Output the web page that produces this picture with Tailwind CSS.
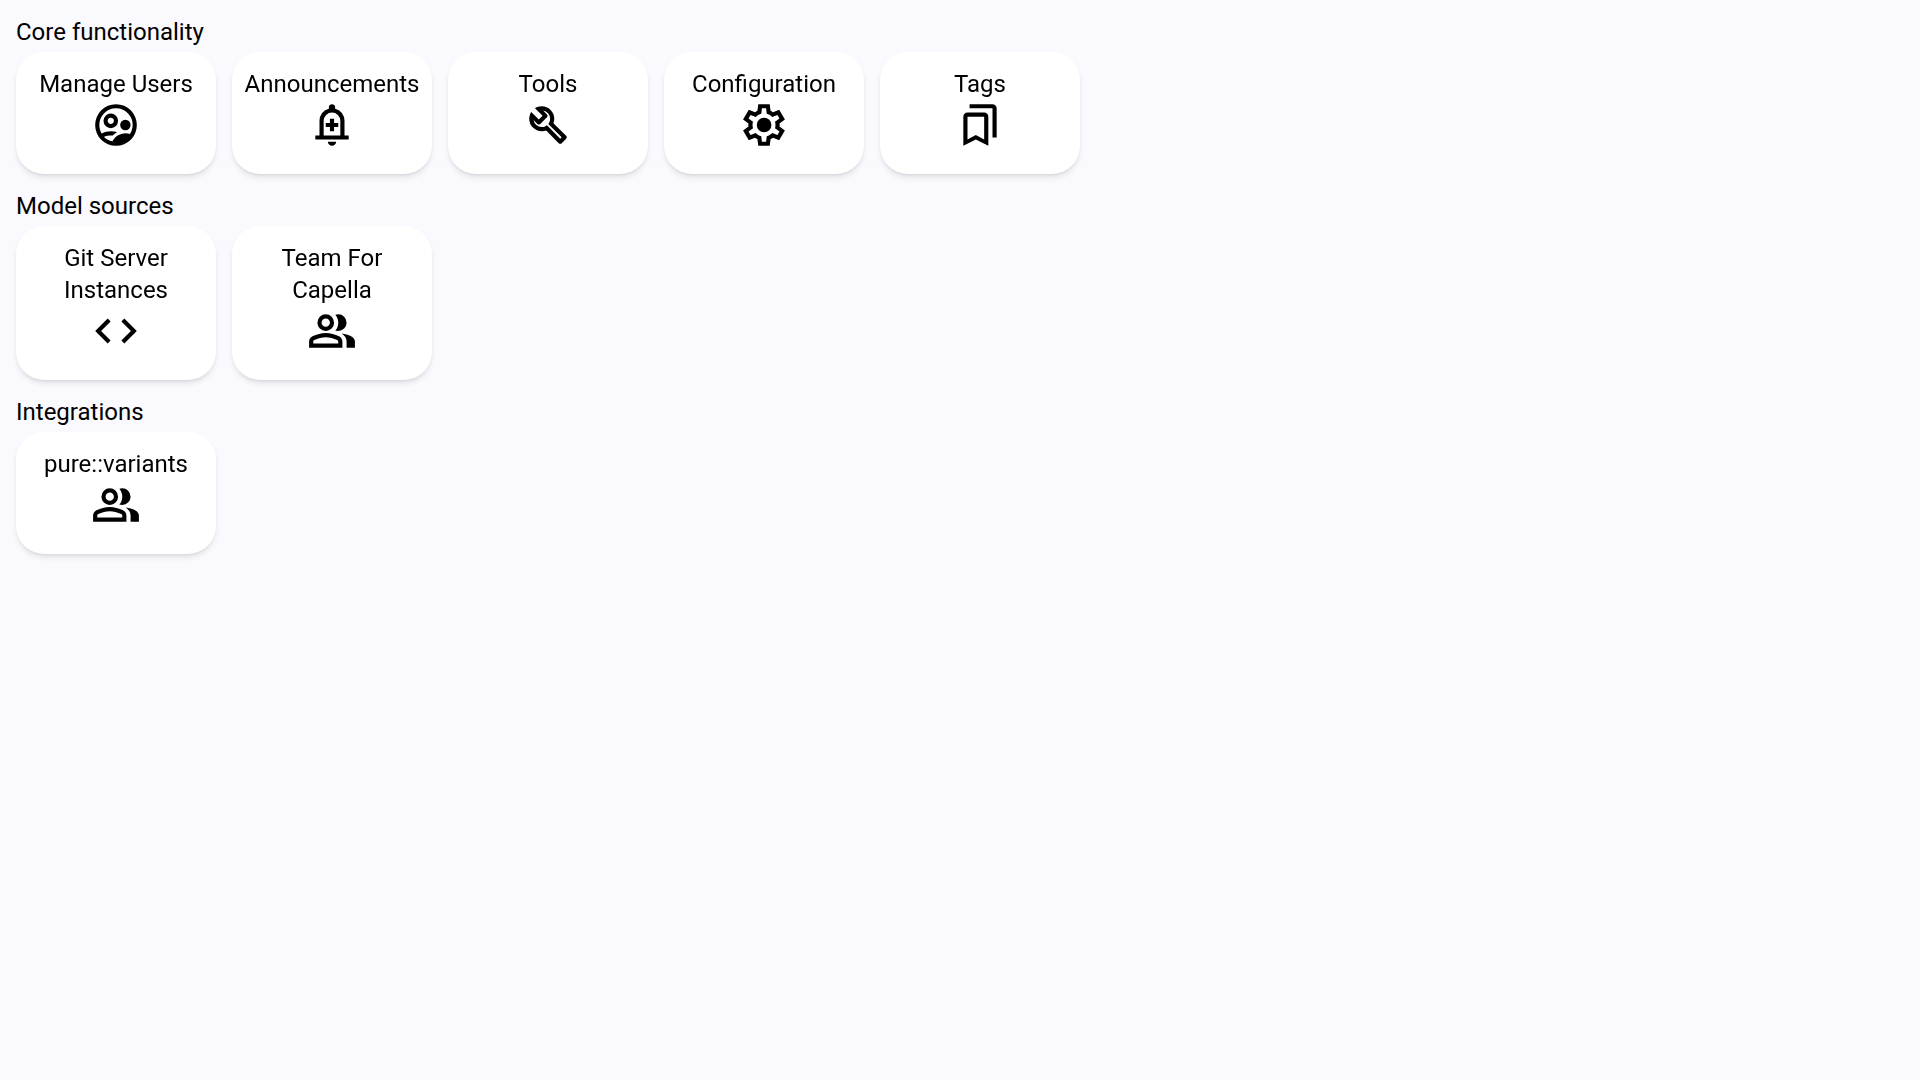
<!DOCTYPE html>
<html lang="en">
<head>
<meta charset="utf-8">
<meta name="viewport" content="width=device-width, initial-scale=1">
<title>Settings</title>
<script src="https://cdn.jsdelivr.net/npm/@tailwindcss/browser@4"></script>
</head>
<body class="min-h-screen bg-[#faf9fd] p-4 font-[Roboto,sans-serif] text-2xl text-black">
<svg class="hidden" aria-hidden="true">
  <symbol id="group" viewBox="0 -960 960 960"><path d="M40-160v-112q0-34 17.5-62.5T104-378q62-31 126-46.5T360-440q66 0 130 15.5T616-378q29 15 46.5 43.5T680-272v112H40Zm720 0v-120q0-44-24.5-84.5T666-434q51 6 96 20.5t84 35.5q36 20 55 44.5t19 53.5v120H760ZM360-480q-66 0-113-47t-47-113q0-66 47-113t113-47q66 0 113 47t47 113q0 66-47 113t-113 47Zm400-160q0 66-47 113t-113 47q-11 0-28-2.5t-28-5.5q27-32 41.5-71t14.5-81q0-42-14.5-81T544-792q14-5 28-6.5t28-1.5q66 0 113 47t47 113ZM120-240h480v-32q0-11-5.5-20T580-306q-54-27-109-40.5T360-360q-56 0-111 13.5T140-306q-9 5-14.5 14t-5.5 20v32Zm240-320q33 0 56.5-23.5T440-640q0-33-23.5-56.5T360-720q-33 0-56.5 23.5T280-640q0 33 23.5 56.5T360-560Z"/></symbol>
</svg>
<main class="flex flex-col gap-4">
  <section class="flex flex-col gap-1">
    <h2>Core functionality</h2>
    <div class="flex flex-wrap items-start gap-4">
      <a href="#" class="flex w-50 flex-col items-center rounded-[28px] bg-white px-2 pt-4 pb-6 text-center shadow-md will-change-transform">
        <span>Manage Users</span>
        <svg class="size-[50px]" viewBox="0 -960 960 960" fill="currentColor" aria-hidden="true"><path fill-rule="evenodd" d="M412-168q45-91 120-121.5T660-320q23 0 45 4t43 10q24-38 38-82t14-92q0-134-93-227t-227-93q-134 0-227 93t-93 227q0 45 11.5 86t34.5 76q41-20 85-31t89-11q32 0 61.5 5.5T500-340q-23 12-43.5 28T418-278q-12-2-20.5-2H372q-32 0-63.5 7T248-252q32 32 73.5 53.5T412-168ZM480-80q-83 0-156-31.5T197-197q-54-54-85.5-127T80-480q0-83 31.5-156T197-763q54-54 127-85.5T480-880q83 0 156 31.5T763-763q54 54 85.5 127T880-480q0 83-31.5 156T763-197q-54 54-127 85.5T480-80ZM380-420q-58 0-99-41t-41-99q0-58 41-99t99-41q58 0 99 41t41 99q0 58-41 99t-99 41Zm0-80q25 0 42.5-17.5T440-560q0-25-17.5-42.5T380-620q-25 0-42.5 17.5T320-560q0 25 17.5 42.5T380-500Zm280 120q-42 0-71-29t-29-71q0-42 29-71t71-29q42 0 71 29t29 71q0 42-29 71t-71 29Z"/></svg>
      </a>
      <a href="#" class="flex w-50 flex-col items-center rounded-[28px] bg-white px-2 pt-4 pb-6 text-center shadow-md will-change-transform">
        <span>Announcements</span>
        <svg class="size-[50px]" viewBox="0 -960 960 960" fill="currentColor" aria-hidden="true"><path d="M160-200v-80h80v-280q0-84 50.5-149T420-792v-28q0-25 17.5-42.5T480-880q25 0 42.5 17.5T540-820v28q79 18 129.5 83T720-560v280h80v80H160Zm320 120q-33 0-56.5-23.5T400-160h160q0 33-23.5 56.5T480-80ZM320-280h320v-280q0-66-47-113t-113-47q-66 0-113 47t-47 113v280Zm120-80h80v-80h80v-80h-80v-80h-80v80h-80v80h80v80Z"/></svg>
      </a>
      <a href="#" class="flex w-50 flex-col items-center rounded-[28px] bg-white px-2 pt-4 pb-6 text-center shadow-md will-change-transform">
        <span>Tools</span>
        <svg class="size-[50px]" viewBox="0 -960 960 960" fill="currentColor" aria-hidden="true"><path d="M686-132 444-376q-20 8-40.5 12t-43.5 4q-100 0-170-70t-70-170q0-36 10-68.5t28-61.5l146 146 72-72-146-146q29-18 61.5-28t68.5-10q100 0 170 70t70 170q0 23-4 43.5T584-516l244 242q12 12 12 29t-12 29l-84 84q-12 12-29 12t-29-12Zm29-85 27-27-256-256q18-20 26-46.5t8-53.5q0-60-38.5-104.5T386-758l74 74q12 12 12 28t-12 28L332-500q-12 12-28 12t-28-12l-74-74q9 57 53.5 95.5T360-440q26 0 53-8t47-25l255 256Z"/></svg>
      </a>
      <a href="#" class="flex w-50 flex-col items-center rounded-[28px] bg-white px-2 pt-4 pb-6 text-center shadow-md will-change-transform">
        <span>Configuration</span>
        <svg class="size-[50px]" viewBox="0 -960 960 960" fill="currentColor" aria-hidden="true"><path d="m370-80-16-128q-13-5-24.5-12T307-235l-119 50L78-375l103-78q-1-7-1-13.5v-27q0-6.5 1-13.5L78-585l110-190 119 50q11-8 23-15t24-12l16-128h220l16 128q13 5 24.5 12t22.5 15l119-50 110 190-103 78q1 7 1 13.5v27q0 6.5-2 13.5l103 78-110 190-118-50q-11 8-23 15t-24 12L590-80H370Zm70-80h79l14-106q31-8 57.5-23.5T639-327l99 41 39-68-86-65q5-14 7-29.5t2-31.5q0-16-2-31.5t-7-29.5l86-65-39-68-99 42q-22-23-48.5-38.5T533-694l-13-106h-79l-14 106q-31 8-57.5 23.5T321-633l-99-41-39 68 86 64q-5 15-7 30t-2 32q0 16 2 31t7 30l-86 65 39 68 99-42q22 23 48.5 38.5T427-266l13 106Zm42-180q58 0 99-41t41-99q0-58-41-99t-99-41q-59 0-99.5 41T342-480q0 58 40.5 99t99.5 41Z"/></svg>
      </a>
      <a href="#" class="flex w-50 flex-col items-center rounded-[28px] bg-white px-2 pt-4 pb-6 text-center shadow-md will-change-transform">
        <span>Tags</span>
        <svg class="size-[50px]" viewBox="0 -960 960 960" fill="currentColor" aria-hidden="true"><path d="M160-80v-560q0-33 23.5-56.5T240-720h320q33 0 56.5 23.5T640-640v560L400-200 160-80Zm80-121 160-86 160 86v-439H240v439Zm480-39v-560H280v-80h440q33 0 56.5 23.5T800-800v560h-80Z"/></svg>
      </a>
    </div>
  </section>
  <section class="flex flex-col gap-1">
    <h2>Model sources</h2>
    <div class="flex flex-wrap items-start gap-4">
      <a href="#" class="flex w-50 flex-col items-center rounded-[28px] bg-white px-8 pt-4 pb-6 text-center shadow-md will-change-transform">
        <span>Git Server Instances</span>
        <svg class="size-[50px]" viewBox="0 -960 960 960" fill="currentColor" aria-hidden="true"><path d="M320-240 80-480l240-240 57 57-184 184 183 183-56 56Zm320 0-57-57 184-184-183-183 56-56 240 240-240 240Z"/></svg>
      </a>
      <a href="#" class="flex w-50 flex-col items-center rounded-[28px] bg-white px-8 pt-4 pb-6 text-center shadow-md will-change-transform">
        <span>Team For Capella</span>
        <svg class="size-[50px]" fill="currentColor" aria-hidden="true"><use href="#group"/></svg>
      </a>
    </div>
  </section>
  <section class="flex flex-col gap-1">
    <h2>Integrations</h2>
    <div class="flex flex-wrap items-start gap-4">
      <a href="#" class="flex w-50 flex-col items-center rounded-[28px] bg-white px-2 pt-4 pb-6 text-center shadow-md will-change-transform">
        <span>pure::variants</span>
        <svg class="size-[50px]" fill="currentColor" aria-hidden="true"><use href="#group"/></svg>
      </a>
    </div>
  </section>
</main>
</body>
</html>
